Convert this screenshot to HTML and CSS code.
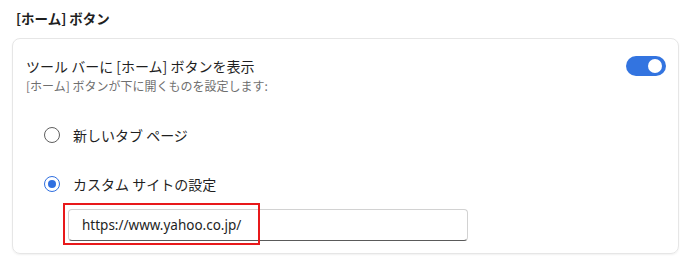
FILE: index.html
```html
<!DOCTYPE html>
<html lang="ja">
<head>
<meta charset="utf-8">
<link rel="stylesheet" href="styles.css">
</head>
<body>
<div class="page">
  <h2 class="title">[ホーム] ボタン</h2>
  <div class="card">
    <div class="row-head">
      <div class="head-text">
        <div class="label">ツール バーに [ホーム] ボタンを表示</div>
        <div class="sub">[ホーム] ボタンが下に開くものを設定します:</div>
      </div>
      <div class="toggle"><span class="knob"></span></div>
    </div>
    <div class="options">
      <label class="opt"><span class="radio"></span><span class="opt-text">新しいタブ ページ</span></label>
      <label class="opt opt-2"><span class="radio checked"></span><span class="opt-text">カスタム サイトの設定</span></label>
      <div class="input-wrap">
        <div class="input">https://www.yahoo.co.jp/</div>
        <div class="highlight"></div>
      </div>
    </div>
  </div>
</div>
</body>
</html>
```
FILE: styles.css
```css
* { box-sizing: border-box; }
html, body { margin: 0; padding: 0; background: #fff; }
body {
  width: 691px; height: 261px; overflow: hidden;
  font-family: "Segoe UI", "Noto Sans", "Noto Sans CJK JP", sans-serif;
  color: #1f1f1f;
}
.page { padding: 8px 12px 0 12px; }
.title {
  margin: 0 0 0 4px;
  font-size: 13.5px; font-weight: 700;
  line-height: 20px;
  font-family: "Noto Sans CJK JP", sans-serif;
  color: #1f1f1f;
}
.card {
  margin-top: 10px;
  width: 667px;
  height: 216px;
  border: 1px solid #e6e6e6;
  border-radius: 8px;
  box-shadow: 0 1px 2px rgba(0,0,0,0.06);
  padding: 17px 12px 0 13px;
}
.row-head { display: flex; justify-content: space-between; align-items: flex-start; }
.label {
  font-family: "Noto Sans CJK JP", sans-serif;
  font-size: 14px; line-height: 20px; color: #1f1f1f;
}
.sub {
  font-family: "Noto Sans CJK JP", sans-serif;
  font-size: 12px; line-height: 16px; color: #6f6f6f; margin-top: 2px;
}
.toggle {
  margin-top: 0px;
  width: 40px; height: 20px; border-radius: 10px;
  background: #3374e0; position: relative;
}
.knob {
  position: absolute; right: 4px; top: 3px;
  width: 14px; height: 14px; border-radius: 50%; background: #fff;
}
.options { padding-left: 18px; margin-top: 31px; }
.opt { display: flex; align-items: center; height: 20px; }
.opt-2 { margin-top: 29px; }
.radio {
  width: 16px; height: 16px; border-radius: 50%;
  border: 1.5px solid #5f5f5f; margin-right: 13px; position: relative; flex: none;
}
.radio.checked { border-color: #2f6fe0; }
.radio.checked::after {
  content: ""; position: absolute; left: 2.5px; top: 2.5px;
  width: 8px; height: 8px; border-radius: 50%; background: #2f6fe0;
}
.opt-text {
  font-family: "Noto Sans CJK JP", sans-serif;
  font-size: 14px; color: #1f1f1f;
}
.input-wrap { position: relative; margin-left: 24px; margin-top: 15px; width: 400px; }
.input {
  width: 400px; height: 32px;
  border: 1px solid #d2d2d2; border-bottom: 1px solid #5a5a5a;
  border-radius: 4px;
  padding: 0 13px;
  font-family: "Segoe UI", "Noto Sans", sans-serif;
  font-size: 13.5px; line-height: 30px; color: #1f1f1f;
}
.highlight {
  position: absolute; left: -5px; top: -6px;
  width: 197px; height: 42px;
  border: 2px solid #e8191b;
}
```
